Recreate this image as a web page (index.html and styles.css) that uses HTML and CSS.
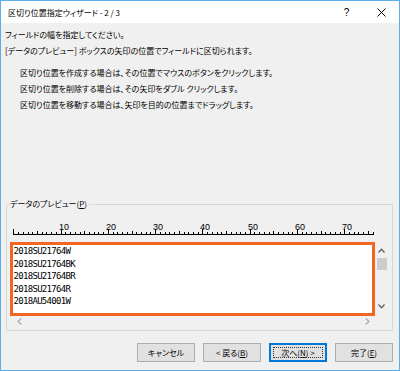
FILE: index.html
```html
<!DOCTYPE html>
<html lang="ja">
<head>
    <meta charset="UTF-8">
    <meta name="viewport" content="width=device-width, initial-scale=1.0">
    <title>区切り位置指定ウィザード</title>
    <link rel="stylesheet" href="styles.css">
</head>
<body>

    <div class="dialog">
        <!-- Title bar -->
        <div class="titlebar">
            <span class="title">区切り位置指定ウィザード - 2 / 3</span>
            <span class="help">?</span>
            <span class="close">
                <svg width="9" height="9" viewBox="0 0 9 9"><path d="M0.5 0.5L8.5 8.5M8.5 0.5L0.5 8.5" stroke="#000" stroke-width="1" fill="none"/></svg>
            </span>
        </div>

        <!-- Main content -->
        <div class="content">
            <div class="intro">
                <p>フィールドの幅を指定してください。</p>
                <p>[データのプレビュー] ボックスの矢印の位置でフィールドに区切られます。</p>
            </div>

            <div class="howto">
                <p>区切り位置を作成する場合は、その位置でマウスのボタンをクリックします。</p>
                <p>区切り位置を削除する場合は、その矢印をダブル クリックします。</p>
                <p>区切り位置を移動する場合は、矢印を目的の位置までドラッグします。</p>
            </div>

            <!-- Data preview -->
            <fieldset class="preview">
                <legend>データのプレビュー(<u>P</u>)</legend>

                <svg class="ruler" width="378" height="28" viewBox="0 0 378 28">
                    <path d="M3 22.5H364" stroke="#000" stroke-width="1"/>
                    <path stroke="#000" stroke-width="1" fill="none" d="
                        M3.5 17V22 M8.5 20V22 M13.5 20V22 M18.5 20V22 M22.5 20V22 M27.5 19V22 M32.5 20V22 M36.5 20V22 M41.5 20V22 M46.5 20V22
                        M51.5 17V22 M55.5 20V22 M60.5 20V22 M65.5 20V22 M70.5 20V22 M74.5 19V22 M79.5 20V22 M84.5 20V22 M88.5 20V22 M93.5 20V22
                        M98.5 17V22 M103.5 20V22 M107.5 20V22 M112.5 20V22 M117.5 20V22 M122.5 19V22 M126.5 20V22 M131.5 20V22 M136.5 20V22 M140.5 20V22
                        M145.5 17V22 M150.5 20V22 M155.5 20V22 M159.5 20V22 M164.5 20V22 M169.5 19V22 M174.5 20V22 M178.5 20V22 M183.5 20V22 M188.5 20V22
                        M192.5 17V22 M197.5 20V22 M202.5 20V22 M207.5 20V22 M211.5 20V22 M216.5 19V22 M221.5 20V22 M226.5 20V22 M230.5 20V22 M235.5 20V22
                        M240.5 17V22 M244.5 20V22 M249.5 20V22 M254.5 20V22 M259.5 20V22 M263.5 19V22 M268.5 20V22 M273.5 20V22 M278.5 20V22 M282.5 20V22
                        M287.5 17V22 M292.5 20V22 M296.5 20V22 M301.5 20V22 M306.5 20V22 M311.5 19V22 M315.5 20V22 M320.5 20V22 M325.5 20V22 M330.5 20V22
                        M334.5 17V22 M339.5 20V22 M344.5 20V22 M348.5 20V22 M353.5 20V22 M358.5 19V22 M363.5 20V22"/>
                    <g class="ruler-num" text-anchor="middle">
                        <text x="53.9" y="18">10</text>
                        <text x="100.9" y="18">20</text>
                        <text x="147.9" y="18">30</text>
                        <text x="194.9" y="18">40</text>
                        <text x="242.9" y="18">50</text>
                        <text x="289.9" y="18">60</text>
                        <text x="336.9" y="18">70</text>
                    </g>
                </svg>

                <div class="listbox">
                    <div class="rows">
                        <div>2018SU21764W</div>
                        <div>2018SU21764BK</div>
                        <div>2018SU21764BR</div>
                        <div>2018SU21764R</div>
                        <div>2018AU54001W</div>
                    </div>
                    <div class="vscroll">
                        <div class="arrow">
                            <svg width="7" height="5" viewBox="0 0 7 5"><path d="M0.5 4.5L3.5 1.2L6.5 4.5" stroke="#606060" stroke-width="1.3" fill="none"/></svg>
                        </div>
                        <div class="thumb"></div>
                        <div class="track"></div>
                        <div class="arrow arrow-down">
                            <svg width="7" height="5" viewBox="0 0 7 5"><path d="M0.5 0.5L3.5 3.8L6.5 0.5" stroke="#606060" stroke-width="1.3" fill="none"/></svg>
                        </div>
                    </div>
                    <div class="hscroll">
                        <svg width="5" height="7" viewBox="0 0 5 7"><path d="M4.3 0.5L1 3.5L4.3 6.5" stroke="#ababab" stroke-width="1.3" fill="none"/></svg>
                        <svg width="5" height="7" viewBox="0 0 5 7"><path d="M0.7 0.5L4 3.5L0.7 6.5" stroke="#ababab" stroke-width="1.3" fill="none"/></svg>
                    </div>
                    <div class="corner"></div>

                    <!-- Highlight frame over the list -->
                    <div class="highlight"></div>
                </div>
            </fieldset>

            <!-- Buttons -->
            <div class="buttons">
                <button>キャンセル</button>
                <button>&lt; 戻る(<u>B</u>)</button>
                <button class="default">次へ(<u>N</u>) &gt;</button>
                <button>完了(<u>E</u>)</button>
            </div>
        </div>
    </div>

</body>
</html>
```

FILE: styles.css
```css
* {
    box-sizing: border-box;
}

body {
    margin: 0;
    font-family: "Noto Sans CJK JP", "Noto Sans", sans-serif;
    font-size: 8px;
    font-feature-settings: "palt";
    color: #000;
    background-color: #fff;
}

p {
    margin: 0;
}

/* Dialog frame */
.dialog {
    width: 400px;
    height: 371px;
    border: 1px solid #5caeea;
    background-color: #f0f0f0;
    display: flex;
    flex-direction: column;
}

/* Title bar */
.titlebar {
    height: 22px;
    background-color: #fff;
    display: flex;
    align-items: center;
}

.title {
    flex: 1;
    padding-left: 7px;
}

.help {
    width: 33px;
    text-align: center;
    font-family: "Liberation Sans", sans-serif;
    font-size: 10px;
}

.close {
    width: 36px;
    display: flex;
    justify-content: center;
    align-items: center;
}

/* Main content */
.content {
    flex: 1;
    padding: 4px 6px 0 4px;
}

.intro p,
.howto p {
    line-height: 16px;
    white-space: nowrap;
}

.howto {
    margin: 6px 0 0 15px;
}

/* Data preview group */
.preview {
    margin: 83px 0 0 1px;
    padding: 0 4px 3px 3px;
    border: 1px solid #d9d9d9;
    min-width: 0;
}

.preview legend {
    padding: 0 2px 0 0;
    line-height: 16px;
}

.ruler {
    display: block;
}

.ruler-num {
    font-family: "Liberation Sans", sans-serif;
    font-size: 9px;
    fill: #000;
}

.listbox {
    position: relative;
    width: 377px;
    height: 85px;
    margin: 2px 0 0 1px;
    display: grid;
    grid-template-columns: 1fr 13px;
    grid-template-rows: 1fr 12px;
    background-color: #f0f0f0;
}

.rows {
    background-color: #fff;
    padding: 3px 0 0 2.5px;
    font-family: "DejaVu Sans Mono", monospace;
    font-size: 9px;
    letter-spacing: -0.69px;
    line-height: 12.5px;
}

.vscroll {
    display: flex;
    flex-direction: column;
    align-items: center;
}

.vscroll .arrow {
    height: 16px;
    display: flex;
    align-items: center;
    justify-content: center;
}

.vscroll .arrow-down {
    margin-bottom: 1px;
}

.vscroll .thumb {
    width: 10px;
    height: 12px;
    background-color: #cdcdcd;
}

.vscroll .track {
    flex: 1;
}

.hscroll {
    display: flex;
    justify-content: space-between;
    align-items: center;
    padding: 0 5.5px;
}

/* Orange frame drawn over the list */
.highlight {
    position: absolute;
    left: -1px;
    top: 0;
    width: 365px;
    height: 74px;
    border: 3px solid #f36523;
    pointer-events: none;
}

/* Buttons */
.buttons {
    display: flex;
    justify-content: flex-end;
    gap: 8px;
    margin-top: 12px;
}

button {
    position: relative;
    width: 58px;
    height: 19px;
    padding: 0;
    font-family: inherit;
    font-size: 8px;
    font-feature-settings: "palt";
    color: #000;
    background-color: #e1e1e1;
    border: 1px solid #adadad;
}

button.default {
    border-color: #0078d7;
    box-shadow: inset 0 0 0 1px #0078d7;
}

/* Focus rectangle */
button.default::after {
    content: "";
    position: absolute;
    inset: 3px;
    border: 1px dotted #333;
}
```
